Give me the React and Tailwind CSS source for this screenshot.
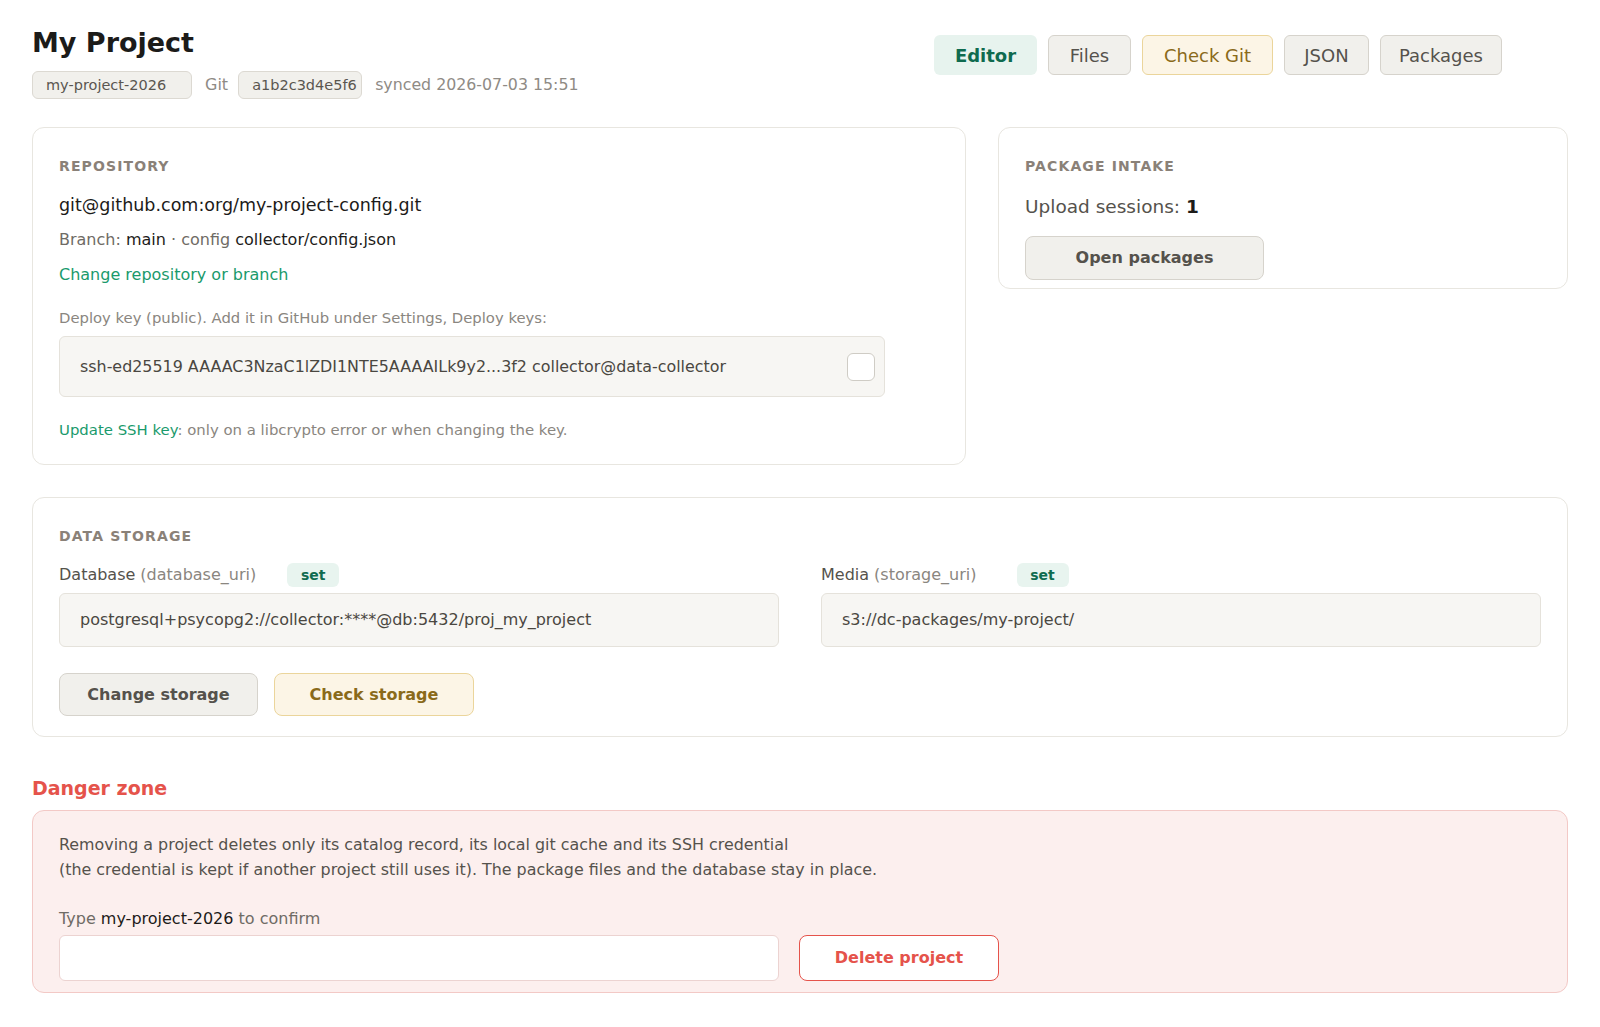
import React from 'react';

const font = { fontFamily: '"DejaVu Sans", "Noto Sans", sans-serif' };

const Label = ({ children }) => (
  <div className="text-[14px] leading-5 font-bold tracking-[0.08em] uppercase text-[#8a8178]">{children}</div>
);

const Card = ({ className = '', children }) => (
  <div className={`bg-white border border-[#e8e6e0] rounded-xl px-[26px] pt-[28px] ${className}`}>{children}</div>
);

const Badge = ({ className = '' }) => (
  <span className={`inline-flex items-center justify-center h-6 w-[52px] rounded-md bg-[#e8f4ef] text-[#0f6b4f] text-[14px] font-bold ${className}`}>
    set
  </span>
);

export default function App() {
  return (
    <div className="min-h-screen bg-white px-8 pt-[26px] pb-8 text-[#1c1b19]" style={font}>
      {/* Header */}
      <div className="flex justify-between items-start">
        <div>
          <h1 className="text-[27px] leading-[34px] font-bold">My Project</h1>
          <div className="mt-[11px] flex items-center text-[16px] leading-6">
            <span className="h-7 w-[160px] flex items-center pl-[13px] rounded-md bg-[#f1f0ec] border border-[#dcd9d2] text-[14.5px] text-[#5a5650]">
              my-project-2026
            </span>
            <span className="ml-[13px] text-[#8f8b85]">Git</span>
            <span className="ml-[10px] h-7 w-[124px] flex items-center pl-[13px] rounded-md bg-[#f1f0ec] border border-[#dcd9d2] text-[14.5px] text-[#5a5650]">
              a1b2c3d4e5f6
            </span>
            <span className="ml-[13px] text-[15.8px] text-[#8f8b85]">synced 2026-07-03 15:51</span>
          </div>
        </div>
        <div className="mt-[9px] mr-[66px] flex gap-[11px] text-[18px]">
          <button className="w-[103px] h-10 rounded-md bg-[#e7f3ee] text-[#0f6b4f] font-bold">Editor</button>
          <button className="w-[83px] h-10 rounded-md border bg-[#f1f0ec] border-[#d6d3cc] text-[#55524c]">Files</button>
          <button className="w-[131px] h-10 rounded-md border bg-[#fcf5e6] border-[#ebd59b] text-[#8a6a1a]">Check Git</button>
          <button className="w-[85px] h-10 rounded-md border bg-[#f1f0ec] border-[#d6d3cc] text-[#55524c]">JSON</button>
          <button className="w-[122px] h-10 rounded-md border bg-[#f1f0ec] border-[#d6d3cc] text-[#55524c]">Packages</button>
        </div>
      </div>

      {/* Top row */}
      <div className="mt-[28px] grid grid-cols-[minmax(0,1fr)_570px] gap-8 items-start">
        <Card className="pb-[25px]">
          <Label>Repository</Label>
          <div className="mt-[17px] text-[17.5px] leading-6 text-[#1c1b19]">git@github.com:org/my-project-config.git</div>
          <div className="mt-[13px] text-[16px] leading-5 text-[#6f6b65]">
            Branch: <span className="text-[#1c1b19]">main</span> · config <span className="text-[#1c1b19]">collector/config.json</span>
          </div>
          <div className="mt-[15px] text-[16px] leading-5 text-[#1a9a6c]">Change repository or branch</div>
          <div className="mt-6 text-[14.8px] leading-[18px] text-[#8a8680]">
            Deploy key (public). Add it in GitHub under Settings, Deploy keys:
          </div>
          <div className="mt-[9px] w-[826px] h-[61px] flex items-center justify-between pl-5 pr-[9px] rounded-md bg-[#f7f6f3] border border-[#e5e2db]">
            <span className="text-[15.9px] text-[#4a4741]">ssh-ed25519 AAAAC3NzaC1lZDI1NTE5AAAAILk9y2...3f2 collector@data-collector</span>
            <span className="w-7 h-7 rounded-md bg-white border border-[#cfccc5]" />
          </div>
          <div className="mt-6 text-[14.9px] leading-[18px] text-[#8a8680]">
            <span className="text-[#1a9a6c]">Update SSH key</span>: only on a libcrypto error or when changing the key.
          </div>
        </Card>

        <Card className="pb-2">
          <Label>Package intake</Label>
          <div className="mt-[18px] text-[18.5px] leading-[26px] text-[#55524c]">
            Upload sessions: <span className="font-bold text-[#1c1b19]">1</span>
          </div>
          <button className="mt-4 w-[239px] h-11 rounded-lg bg-[#f1f0ec] border border-[#d6d3cc] text-[16px] font-bold text-[#55524c]">
            Open packages
          </button>
        </Card>
      </div>

      {/* Data storage */}
      <Card className="mt-8 pb-5">
        <Label>Data storage</Label>
        <div className="mt-[17px] grid grid-cols-[720px_720px] justify-between">
          <div>
            <div className="h-6 flex items-center text-[16px] text-[#55524c]">
              Database <span className="ml-[5px] text-[#8a8680]">(database_uri)</span>
              <Badge className="ml-[31px]" />
            </div>
            <div className="mt-[6px] h-[54px] flex items-center px-5 rounded-md bg-[#f7f6f3] border border-[#e5e2db] text-[16px] text-[#4a4741]">
              postgresql+psycopg2://collector:****@db:5432/proj_my_project
            </div>
          </div>
          <div>
            <div className="h-6 flex items-center text-[16px] text-[#55524c]">
              Media <span className="ml-[5px] text-[#8a8680]">(storage_uri)</span>
              <Badge className="ml-[40px]" />
            </div>
            <div className="mt-[6px] h-[54px] flex items-center px-5 rounded-md bg-[#f7f6f3] border border-[#e5e2db] text-[16px] text-[#4a4741]">
              s3://dc-packages/my-project/
            </div>
          </div>
        </div>
        <div className="mt-[26px] flex gap-4">
          <button className="w-[199px] h-[43px] rounded-lg bg-[#f1f0ec] border border-[#d6d3cc] text-[16px] font-bold text-[#55524c]">
            Change storage
          </button>
          <button className="w-[200px] h-[43px] rounded-lg bg-[#fcf5e6] border border-[#ebd59b] text-[16px] font-bold text-[#8a6a1a]">
            Check storage
          </button>
        </div>
      </Card>

      {/* Danger zone */}
      <div className="mt-[39px] text-[19px] leading-6 font-bold text-[#e5534b]">Danger zone</div>
      <div className="mt-[10px] rounded-xl bg-[#fcefee] border border-[#f3c9c6] px-[26px] pt-[21px] pb-[11px]">
        <div className="text-[15.9px] leading-[25px] text-[#55524c]">
          Removing a project deletes only its catalog record, its local git cache and its SSH credential
          <br />
          (the credential is kept if another project still uses it). The package files and the database stay in place.
        </div>
        <div className="mt-[27px] text-[16px] leading-5 text-[#6f6b65]">
          Type <span className="text-[#1c1b19]">my-project-2026</span> to confirm
        </div>
        <div className="mt-[6px] flex gap-5">
          <input className="w-[720px] h-[46px] rounded-md bg-white border border-[#ecd3d1] px-3 outline-none" />
          <button className="w-[200px] h-[46px] rounded-lg bg-white border border-[#e5534b] text-[16px] font-bold text-[#e5534b]">
            Delete project
          </button>
        </div>
      </div>
    </div>
  );
}
